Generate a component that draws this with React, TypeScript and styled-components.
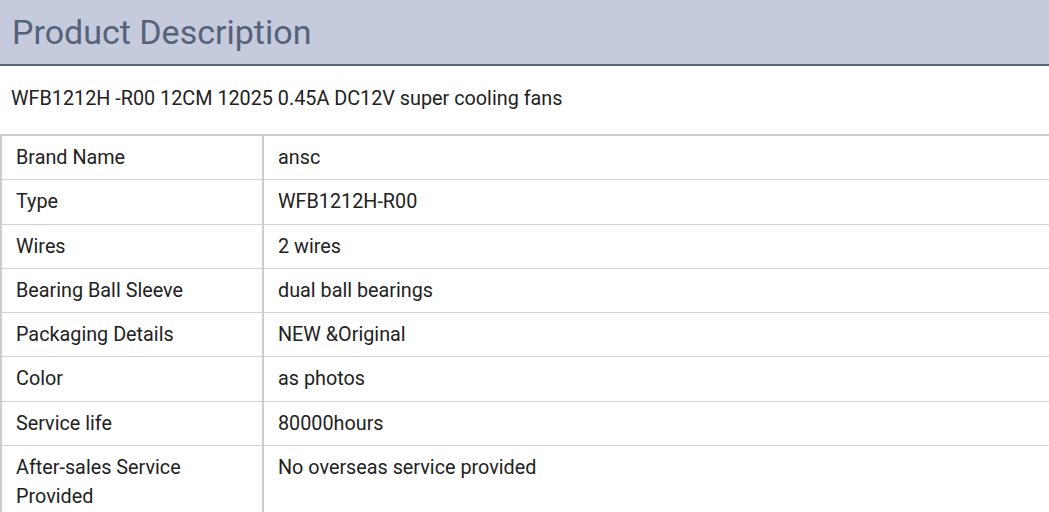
import React from 'react';
import styled, { createGlobalStyle } from 'styled-components';

const GlobalStyle = createGlobalStyle`
  body {
    margin: 0;
    background: #fff;
    font-family: Roboto, 'Noto Sans', Arial, sans-serif;
  }
`;

const Header = styled.div`
  height: 64px;
  background: #c5cbdd;
  border-bottom: 2px solid #58647c;
  display: flex;
  align-items: center;
  padding-left: 12px;
`;

const Title = styled.h2`
  margin: 0;
  font-size: 34px;
  font-weight: 400;
  color: #56627a;
`;

const Summary = styled.p`
  margin: 0;
  padding: 20px 11px 0;
  height: 48px;
  font-size: 19.8px;
  line-height: 26px;
  color: #222;
`;

const Specs = styled.table`
  width: 100%;
  border-collapse: collapse;
  border-top: 2px solid #cdcdcd;
  border-left: 2px solid #cdcdcd;
`;

const Row = styled.tr`
  border-bottom: 1px solid #d2d2d2;
`;

const Cell = styled.td<{ $label?: boolean }>`
  width: ${p => (p.$label ? '230px' : 'auto')};
  padding: 7px 16px 7px 14px;
  font-size: 19.8px;
  line-height: 29.3px;
  color: #222;
  vertical-align: top;
  border-right: ${p => (p.$label ? '2px solid #cdcdcd' : 'none')};
`;

const specs: Array<[string, string]> = [
  ['Brand Name', 'ansc'],
  ['Type', 'WFB1212H-R00'],
  ['Wires', '2 wires'],
  ['Bearing Ball Sleeve', 'dual ball bearings'],
  ['Packaging Details', 'NEW &Original'],
  ['Color', 'as photos'],
  ['Service life', '80000hours'],
  ['After-sales Service Provided', 'No overseas service provided'],
];

const App: React.FC = () => {
  return (
    <>
      <GlobalStyle />
      <Header>
        <Title>Product Description</Title>
      </Header>
      <Summary>WFB1212H -R00 12CM 12025 0.45A DC12V super cooling fans</Summary>
      <Specs>
        <tbody>
          {specs.map(([label, value]) => (
            <Row key={label}>
              <Cell $label>{label}</Cell>
              <Cell>{value}</Cell>
            </Row>
          ))}
        </tbody>
      </Specs>
    </>
  );
};

export default App;
